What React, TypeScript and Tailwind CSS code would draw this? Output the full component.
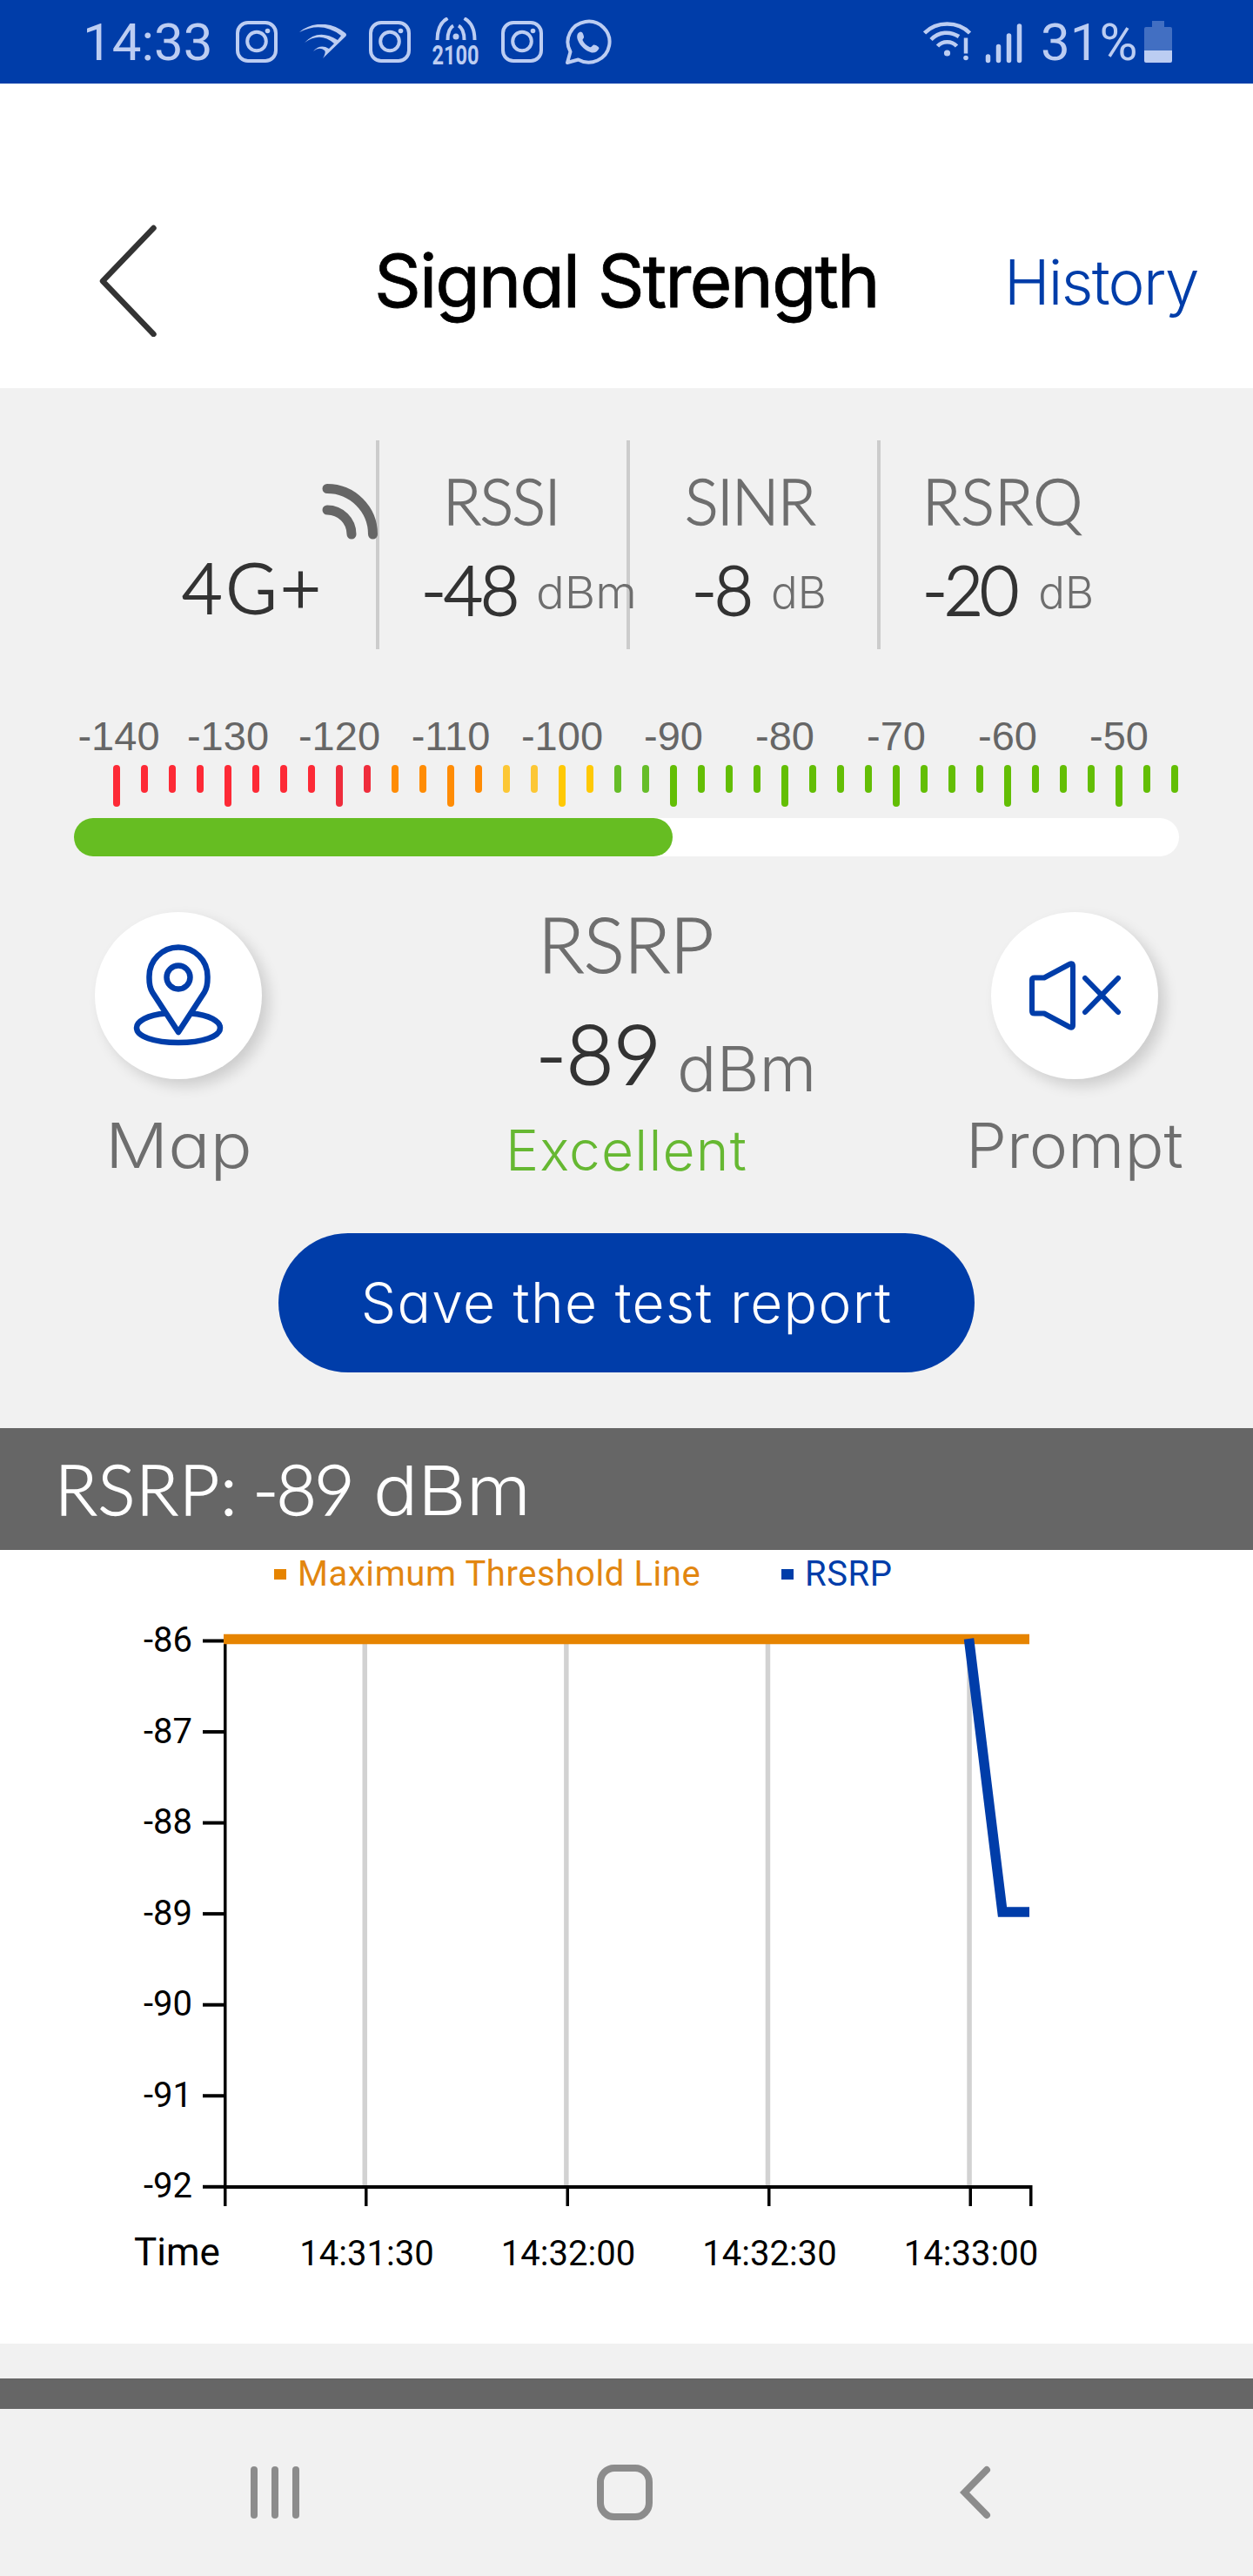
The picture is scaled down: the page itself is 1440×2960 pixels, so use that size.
const STATUS = "#bccdf2";
const BLUE = "#003da9";

function InstagramIcon() {
  return (
    <svg width="48" height="48" viewBox="0 0 48 48" fill="none" stroke={STATUS} strokeWidth="4">
      <rect x="2" y="2" width="44" height="44" rx="12" />
      <circle cx="24" cy="23.5" r="10.8" />
      <circle cx="36.5" cy="11.5" r="2.8" fill={STATUS} stroke="none" />
    </svg>
  );
}

function SwiftIcon() {
  return (
    <svg width="56" height="40" viewBox="0 0 56 40" fill={STATUS}>
      <path d="M0 9C14-3 36-4 53 10Q55 12 53 14L27 39Q31 32 29 30Q23 25 16 31Q24 22 34 28L40 22Q24 8 6 21Q22 4 44 18L48 13Q26-4 0 9Z" />
    </svg>
  );
}

function BandIcon() {
  return (
    <div className="flex h-[56px] w-[56px] flex-col items-center">
      <svg width="48" height="26" viewBox="0 0 48 26" fill="none" stroke={STATUS} strokeWidth="4" className="shrink-0">
        <path d="M14.5 1C7 5 2.5 14 2.5 26M21 9.500C16.500 12 14.500 19 14.500 26M33.500 1C41 5 45.500 14 45.500 26M27 9.500C31.500 12 33.500 19 33.500 26" />
        <ellipse cx="24" cy="22" rx="3.500" ry="3.500" fill={STATUS} stroke="none" />
      </svg>
      <span className="mt-[3px] origin-top scale-x-[0.76] text-[31px] font-bold leading-[30px]">2100</span>
    </div>
  );
}

function WhatsAppIcon() {
  return (
    <svg width="54" height="53" viewBox="0 0 54 53" fill="none" stroke={STATUS}>
      <path d="M3 50L6.500 37.500A24 23.500 0 1 1 15.500 46.500Z" strokeWidth="4" strokeLinejoin="round" />
      <path
        d="M18 14.500C14 16 13.500 20 15 24C18 31.500 24 36.500 31 38.500C35 39 38 37 39.500 33.500C39 31 35 29.500 33 29.500C31 31 30.500 33 28.500 32C25 30.500 22 27.500 20.500 24C20.500 22.500 22.500 22 22 20C21.500 17.500 20.500 14.500 18 14.500Z"
        fill={STATUS}
        stroke="none"
      />
    </svg>
  );
}

function WifiAlertIcon() {
  return (
    <svg width="56" height="46" viewBox="0 0 56 46" fill="none" stroke={STATUS} strokeWidth="4.500">
      <path d="M1.500 13C15-1 40-1 53.500 13M9 20.500C18 11 31 10.500 41 17M16.500 28C22 21.500 33 21.500 38.500 28" />
      <circle cx="27.500" cy="36" r="3.600" fill={STATUS} stroke="none" />
      <path d="M49 18.500V36.500" />
      <circle cx="49" cy="41.500" r="2.800" fill={STATUS} stroke="none" />
    </svg>
  );
}

function SignalBarsIcon() {
  return (
    <svg width="44" height="46" viewBox="0 0 44 46" stroke={STATUS} strokeWidth="5.500" strokeLinecap="round">
      <path d="M3.500 38V42.500M15.500 26.500V42.500M27.500 14V42.500M39.500 3V42.500" />
    </svg>
  );
}

function BatteryIcon() {
  return (
    <svg width="32" height="48" viewBox="0 0 32 48">
      <path d="M9 0H23V7H30Q32 7 32 9V34H0V9Q0 7 2 7H9Z" fill="#426fc2" />
      <path d="M0 34H32V46Q32 48 30 48H2Q0 48 0 46Z" fill={STATUS} />
    </svg>
  );
}

function StatusBar() {
  return (
    <div className="flex h-[96px] items-center bg-[#003da9] pl-[95px] text-[#bccdf2]">
      <span className="w-[176px] pt-[2px] text-[60px] leading-[80px]">14:33</span>
      <InstagramIcon />
      <div className="ml-[25px]"><SwiftIcon /></div>
      <div className="ml-[24px]"><InstagramIcon /></div>
      <div className="ml-[24px]"><BandIcon /></div>
      <div className="ml-[24px]"><InstagramIcon /></div>
      <div className="ml-[25px]"><WhatsAppIcon /></div>
      <div className="ml-[358px]"><WifiAlertIcon /></div>
      <div className="ml-[15px] pt-[3px]"><SignalBarsIcon /></div>
      <span className="ml-[20px] w-[119px] whitespace-nowrap pt-[2px] text-[60px] leading-[80px]">31%</span>
      <BatteryIcon />
    </div>
  );
}

function Header() {
  return (
    <div className="h-[350px] bg-white pt-[140px]">
      <div className="grid h-[172px] grid-cols-[430px_724px_286px] items-center font-['Inter'] [font-feature-settings:'cv11']">
        <svg width="72" height="130" viewBox="0 0 72 130" fill="none" stroke="#333" strokeWidth="6.500" strokeLinecap="round" strokeLinejoin="round" className="ml-[112px]">
          <path d="M64.500 5L6 66L64.500 127" />
        </svg>
        <h1 className="whitespace-nowrap pt-[2px] text-[84px] font-normal leading-[100px] tracking-[-2px] text-black [-webkit-text-stroke:0.800px_black]">Signal Strength</h1>
        <a className="pt-[3px] text-[71px] font-light leading-[100px] tracking-[-1.700px] text-[#003da9]">History</a>
      </div>
    </div>
  );
}

const label = "font-['Lato'] font-light text-[72px] leading-[100px] text-[#6e6e6e] [-webkit-text-stroke:1.4px_#6e6e6e]";
const value = "font-['Lato'] font-light text-[78px] leading-[100px] text-[#333] [-webkit-text-stroke:1.8px_#333]";
const unit = "font-['Inter'] font-light text-[51px] leading-[93px] pt-[7px] text-[#6e6e6e] origin-left";

function Metrics() {
  return (
    <div className="flex pl-[144px] pt-[60px] whitespace-nowrap">
      <div className="h-[240px] w-[292px] border-r-4 border-[#ccc] pt-[19px]">
        <div className="h-[100px]">
          <svg width="64" height="64" viewBox="0 0 64 64" fill="none" stroke="#666" strokeWidth="11" strokeLinecap="round" className="relative top-[31px] ml-[226px] max-w-none">
            <path d="M6 5.500A52.500 52.500 0 0 1 58.500 58M6 30A28 28 0 0 1 34 58" />
          </svg>
        </div>
        <div className="pl-[65px] font-['Lato'] text-[80px] font-light leading-[98px] tracking-[4px] text-[#333] [-webkit-text-stroke:2px_#333]">4G+</div>
      </div>
      <div className="h-[240px] w-[288px] border-r-4 border-[#ccc] pt-[19px]">
        <div className={label + " pl-[73px] tracking-[-1.300px]"}>RSSI</div>
        <div className="mt-[2px] flex pl-[48px]">
          <span className={value + " tracking-[-3px]"}>-48</span>
          <span className={unit + " ml-[22px] scale-x-[1.07]"}>dBm</span>
        </div>
      </div>
      <div className="h-[240px] w-[288px] border-r-4 border-[#ccc] pt-[19px]">
        <div className={label + " pl-[63px] tracking-[-1.600px]"}>SINR</div>
        <div className="mt-[2px] flex pl-[71px]">
          <span className={value + " tracking-[-3px]"}>-8</span>
          <span className={unit + " ml-[23px]"}>dB</span>
        </div>
      </div>
      <div className="h-[240px] w-[288px] pt-[19px]">
        <div className={label + " pl-[48px] tracking-[0.500px]"}>RSRQ</div>
        <div className="mt-[2px] flex pl-[48px]">
          <span className={value + " tracking-[-4px]"}>-20</span>
          <span className={unit + " ml-[26px]"}>dB</span>
        </div>
      </div>
    </div>
  );
}

const SCALE = ["-140", "-130", "-120", "-110", "-100", "-90", "-80", "-70", "-60", "-50"];

function tickColor(i: number) {
  if (i < 8) return "bg-[#fd2a36]";
  if (i < 10) return "bg-[#ef2d3c]";
  if (i < 14) return "bg-[#ff8c05]";
  if (i < 16) return "bg-[#fcc735]";
  if (i < 18) return "bg-[#ffc905]";
  if (i < 20) return "bg-[#66bd28]";
  return "bg-[#63be05]";
}

function Ruler() {
  return (
    <div className="mt-[70px]">
      <div className="flex pl-[70px] font-['Liberation_Sans'] text-[47px] leading-[60px] text-[#666]">
        {SCALE.map((s) => (
          <span key={s} className="w-[128px] text-center first:pl-[5px]">{s}</span>
        ))}
      </div>
      <div className="mt-[3px] flex h-[48px] gap-[24px] pl-[130px]">
        {Array.from({ length: 39 }, (_, i) => (
          <span key={i} className={"w-[8px] shrink-0 rounded-[4px] " + (i % 4 === 0 ? "h-[48px] " : "h-[32px] ") + tickColor(i)} />
        ))}
      </div>
      <div className="ml-[85px] mt-[13px] h-[44px] w-[1270px] rounded-full bg-white">
        <div className="h-full w-[688px] rounded-full bg-[#66bd22]" />
      </div>
    </div>
  );
}

const roundButton = "flex h-[192px] w-[192px] items-center justify-center rounded-full bg-white shadow-[8px_8px_16px_rgba(0,0,0,0.15)]";
const caption = "mt-[26px] w-fit origin-left font-['Inter'] text-[71px] font-light leading-[100px] text-[#6e6e6e] [font-feature-settings:'cv11']";

function Reading() {
  return (
    <div className="grid h-[433px] grid-cols-[580px_529px_331px] whitespace-nowrap">
      <div className="pt-[64px]">
        <button className={roundButton + " ml-[109px]"}>
          <svg width="104" height="118" viewBox="0 0 104 118" fill="none" stroke={BLUE} strokeWidth="6.500" strokeLinejoin="round">
            <path d="M37.500 79.500C16 81 4 89 4 96C4 106 24 113 52 113S100 106 100 96C100 89 88 81 66.500 79.500" />
            <path d="M52 101L22 55C18 48 18.500 43 18.500 37A33.500 33.500 0 0 1 85.500 37C85.500 43 86 48 82 55Z" />
            <circle cx="52" cy="38" r="13.500" />
          </svg>
        </button>
        <div className={caption + " ml-[121px] scale-x-[1.13]"}>Map</div>
      </div>
      <div className="pt-[50px]">
        <div className="pl-[38px] font-['Lato'] text-[88px] font-light leading-[100px] text-[#6e6e6e] tracking-[-0.700px] [-webkit-text-stroke:1.200px_#6e6e6e]">RSRP</div>
        <div className="mt-[26px] flex pl-[36px]">
          <span className="font-['Lato'] text-[94px] font-light leading-[100px] text-[#333] [-webkit-text-stroke:2px_#333]">-89</span>
          <span className="ml-[18px] origin-left scale-x-[1.05] pt-[36px] font-['Inter'] text-[72px] font-light leading-[64px] text-[#6e6e6e]">dBm</span>
        </div>
        <div className="mt-[22px] pl-[1px] font-['Inter'] text-[64px] font-light leading-[80px] tracking-[1.200px] text-[#66b832]">Excellent</div>
      </div>
      <div className="pt-[64px]">
        <button className={roundButton + " ml-[30px]"}>
          <svg width="108" height="80" viewBox="0 0 108 80" fill="none" stroke={BLUE} strokeWidth="6" strokeLinejoin="round" strokeLinecap="round">
            <path d="M5 22Q5 19.500 8 19.500H19L48 4Q52 2 52 6V74Q52 78 48 76L19 60.500H8Q5 60.500 5 58Z" />
            <path d="M66 20L104 59M104 20L66 59" />
          </svg>
        </button>
        <div className={caption + " scale-x-[1.055] ml-px"}>Prompt</div>
      </div>
    </div>
  );
}

const Y_LABELS = ["-86", "-87", "-88", "-89", "-90", "-91", "-92"];
const X_LABELS = ["14:31:30", "14:32:00", "14:32:30", "14:33:00"];

function Chart() {
  return (
    <div className="bg-white">
      <div className="flex h-[56px] items-center whitespace-nowrap pl-[315px] text-[40px] leading-[56px] tracking-[0.600px]">
        <div className="flex w-[583px] items-center text-[#e28610]">
          <span className="mr-[13px] h-[12px] w-[14px] bg-[#e68400]" />Maximum Threshold Line
        </div>
        <div className="flex items-center text-[#003da9]">
          <span className="mr-[13px] h-[12px] w-[14px] bg-[#003da9]" />RSRP
        </div>
      </div>
      <svg width="1440" height="856" viewBox="0 1837 1440 856" className="block" fontFamily="Roboto" fontSize="40">
        {X_LABELS.map((t, i) => (
          <g key={t}>
            <rect x={416.5 + i * 231.6} y="1885" width="5.500" height="626" fill="#d2d2d2" />
            <rect x={419 + i * 231.5} y="2511" width="3.500" height="24" />
            <text x={421.5 + i * 231.5} y="2603" textAnchor="middle">{t}</text>
          </g>
        ))}
        {Y_LABELS.map((t, i) => (
          <g key={t}>
            <rect x="233" y={1883.5 + i * 104.55} width="26" height="4" />
            <text x="221" y={1898 + i * 104.55} textAnchor="end">{t}</text>
          </g>
        ))}
        <rect x="257" y="1885" width="3.500" height="650" />
        <rect x="257" y="2511" width="929" height="4" />
        <rect x="1183" y="2511" width="3.500" height="24" />
        <text x="154" y="2603" fontSize="44">Time</text>
        <path d="M257 1883.500H1183" stroke="#e68400" strokeWidth="11.500" />
        <path d="M1113.500 1883L1152 2197H1183" fill="none" stroke={BLUE} strokeWidth="11.500" />
      </svg>
    </div>
  );
}

function NavBar() {
  return (
    <div className="flex h-[192px] items-center pl-[288px]">
      <div className="flex gap-4">
        <span className="h-[60px] w-2 rounded-full bg-[#8c8c8c]" />
        <span className="h-[60px] w-2 rounded-full bg-[#8c8c8c]" />
        <span className="h-[60px] w-2 rounded-full bg-[#8c8c8c]" />
      </div>
      <div className="ml-[342px] h-[64px] w-[64px] rounded-[20px] border-8 border-[#8c8c8c]" />
      <svg width="36" height="62" viewBox="0 0 36 62" fill="none" stroke="#8c8c8c" strokeWidth="8" strokeLinecap="round" className="ml-[353px]">
        <path d="M31 5L5.500 31L31 57" />
      </svg>
    </div>
  );
}

export default function App() {
  return (
    <div className="h-[2960px] w-[1440px] overflow-hidden bg-[#f1f1f1] font-['Roboto',sans-serif] text-black">
      <StatusBar />
      <Header />
      <Metrics />
      <Ruler />
      <Reading />
      <button className="mx-auto block h-[160px] w-[800px] whitespace-nowrap rounded-full bg-[#003da9] font-['Inter'] text-[64px] font-light tracking-[1.300px] text-white [font-feature-settings:'cv11']">
        Save the test report
      </button>
      <div className="mt-[64px] flex h-[140px] items-baseline bg-[#666] pl-[63px] font-['Lato'] text-[80px] font-light leading-[139px] text-white">
        <span className="tracking-[1px] [-webkit-text-stroke:1.4px_white]">RSRP:</span>
        <span className="ml-[17px] tracking-[-2.500px] [-webkit-text-stroke:1.4px_white]">-89</span>
        <span className="ml-[24px] origin-left scale-x-[1.08] font-['Inter'] text-[79px]">dBm</span>
      </div>
      <Chart />
      <div className="mt-[40px] h-[35px] bg-[#666]" />
      <NavBar />
    </div>
  );
}
